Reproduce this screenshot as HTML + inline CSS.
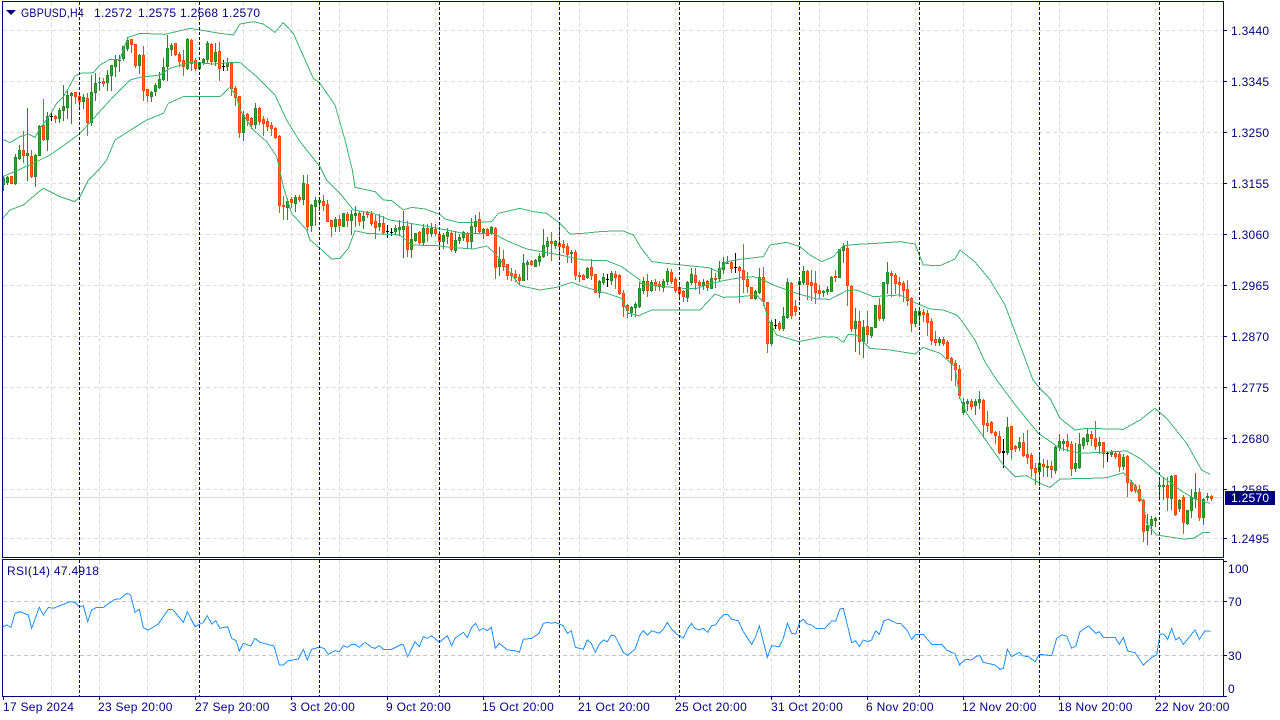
<!DOCTYPE html>
<html>
<head>
<meta charset="utf-8">
<style>
html,body{margin:0;padding:0;background:#fff;width:1280px;height:720px;overflow:hidden}
svg{position:absolute;left:0;top:0;display:block}
text{font-family:"Liberation Sans",sans-serif;font-size:12px;fill:#000080;letter-spacing:.28px}
.c{shape-rendering:crispEdges}
</style>
</head>
<body>
<svg id="s" width="1280" height="720" viewBox="0 0 1280 720" xmlns="http://www.w3.org/2000/svg">
<g id="grid" class="c"></g>
<g id="candles" class="c"></g>
<g id="lines" class="c" fill="none"></g>
<g id="seps" class="c"></g>
<g class="c" stroke="#000080" fill="none">
<path d="M2.5 1.5H1223.5V557.5H2.5Z"/>
<path d="M2.5 559.5H1223.5V696.5H2.5Z"/>
<path d="M1223 30.5h4M1223 81.5h4M1223 132.5h4M1223 183.5h4M1223 234.5h4M1223 285.5h4M1223 336.5h4M1223 387.5h4M1223 438.5h4M1223 489.5h4M1223 538.5h4"/>
<path d="M1223 561.5h4M1223 601.5h4M1223 655.5h4M1223 696.5h4"/>
<path d="M3.5 696v4M99.5 696v4M195.5 696v4M291.5 696v4M387.5 696v4M483.5 696v4M579.5 696v4M675.5 696v4M771.5 696v4M867.5 696v4M963.5 696v4M1059.5 696v4M1155.5 696v4"/>
</g>
<path d="M6 10H16L11 15Z" fill="#000080"/>
<text x="21" y="17" textLength="63" lengthAdjust="spacingAndGlyphs">GBPUSD,H4</text>
<text x="94" y="17">1.2572</text>
<text x="138" y="17">1.2575</text>
<text x="180" y="17">1.2568</text>
<text x="222" y="17">1.2570</text>
<text x="7" y="575">RSI(14) 47.4918</text>
<g>
<text x="1231" y="35">1.3440</text>
<text x="1231" y="86">1.3345</text>
<text x="1231" y="137">1.3250</text>
<text x="1231" y="188">1.3155</text>
<text x="1231" y="239">1.3060</text>
<text x="1231" y="290">1.2965</text>
<text x="1231" y="341">1.2870</text>
<text x="1231" y="392">1.2775</text>
<text x="1231" y="443">1.2680</text>
<text x="1231" y="494">1.2585</text>
<text x="1231" y="543">1.2495</text>
</g>
<rect class="c" x="1225" y="491" width="50" height="14" fill="#000080"/>
<text x="1231" y="502" style="fill:#fff">1.2570</text>
<g>
<text x="1228" y="573">100</text>
<text x="1228" y="606">70</text>
<text x="1228" y="660">30</text>
<text x="1228" y="693">0</text>
</g>
<g>
<text x="3" y="711">17 Sep 2024</text>
<text x="98" y="711">23 Sep 20:00</text>
<text x="195" y="711">27 Sep 20:00</text>
<text x="290" y="711">3 Oct 20:00</text>
<text x="386" y="711">9 Oct 20:00</text>
<text x="482" y="711">15 Oct 20:00</text>
<text x="578" y="711">21 Oct 20:00</text>
<text x="675" y="711">25 Oct 20:00</text>
<text x="771" y="711">31 Oct 20:00</text>
<text x="866" y="711">6 Nov 20:00</text>
<text x="962" y="711">12 Nov 20:00</text>
<text x="1058" y="711">18 Nov 20:00</text>
<text x="1155" y="711">22 Nov 20:00</text>
</g>
</svg>
<script>
var NS="http://www.w3.org/2000/svg";
function el(p,n,a){var e=document.createElementNS(NS,n);for(var k in a)e.setAttribute(k,a[k]);p.appendChild(e);return e;}
var D="g 176 178 184 190,g 176 177 182 184,o 176 176 183 183,g 154 157 183 184,g 145 150 158 159,o 131 150 155 162,g 108 153 155 180,o 150 156 176 177,g 154 155 176 186,g 125 126 155 155,o 99 125 139 140,g 112 116 139 150,k 113 116 116 120,o 115 116 118 122,g 108 110 118 122,g 85 106 110 120,g 91 95 107 118,g 92 93 95 123,o 92 92 96 103,o 94 96 101 106,g 94 97 101 108,o 93 98 122 135,g 75 92 122 125,g 73 83 92 100,g 77 82 82 90,o 78 81 83 86,g 70 75 82 90,g 65 65 75 90,g 55 60 66 76,g 55 60 60 71,g 46 46 58 60,g 37 40 48 50,o 39 39 44 52,o 44 44 65 67,g 54 55 65 73,o 46 55 90 100,o 89 89 95 101,g 91 92 96 101,g 83 85 91 95,g 72 79 87 88,g 58 67 79 80,g 35 48 66 80,g 43 45 49 55,o 43 43 54 55,o 52 54 61 66,o 50 60 66 75,g 38 39 68 69,o 39 40 63 70,o 58 60 68 70,g 62 62 68 69,g 58 59 62 64,g 41 43 59 62,o 43 44 61 64,g 43 52 61 65,o 42 51 68 80,k 60 66 66 70,g 58 63 66 70,o 62 63 88 95,o 86 88 97 105,o 96 96 132 137,g 111 115 132 140,o 113 114 120 125,o 117 118 124 128,g 103 108 124 128,o 107 108 121 124,o 116 119 123 135,o 118 121 126 130,o 122 125 128 135,o 127 128 137 138,o 135 136 205 212,o 196 205 206 219,g 198 201 207 219,o 197 199 202 207,g 195 197 203 211,o 195 197 199 201,g 175 183 199 204,o 175 184 226 230,g 204 205 225 231,g 197 200 206 225,g 198 200 202 210,"
+"o 195 201 205 210,o 200 204 221 221,o 220 220 226 236,g 217 219 226 231,o 215 219 225 231,g 213 213 226 226,o 212 214 220 226,g 210 214 220 234,g 206 213 215 226,o 211 213 221 225,g 212 216 220 228,o 211 212 214 217,o 211 214 223 225,o 215 221 227 238,g 214 223 226 230,o 216 223 232 234,k 225 231 231 237,k 228 232 232 235,g 225 228 231 234,g 220 227 229 235,g 211 226 229 257,o 221 226 249 256,g 224 239 249 257,g 233 233 240 241,o 231 232 242 244,g 224 228 242 245,o 224 228 233 241,g 223 228 233 236,o 224 229 233 235,o 231 234 241 248,g 233 235 241 248,g 228 232 236 243,o 231 233 249 251,g 231 240 250 252,g 234 237 240 243,g 231 232 237 240,o 232 233 241 247,g 218 226 241 248,g 215 221 226 232,o 212 219 231 232,g 228 229 232 238,o 228 229 235 235,g 226 227 233 234,o 227 228 267 278,g 247 259 266 275,o 250 259 266 270,o 264 264 275 279,o 268 273 275 280,o 270 274 277 281,o 274 277 280 284,g 254 263 280 280,g 260 262 264 279,o 260 261 264 265,g 259 260 266 266,g 253 256 261 265,g 229 245 256 257,g 237 241 246 255,o 232 241 243 260,g 240 241 245 248,o 225 243 246 258,o 240 244 247 252,o 243 246 254 262,g 250 252 253 262,o 250 252 275 279,o 272 275 276 281,o 274 275 279 279,g 267 268 277 278,o 259 267 275 279,o 274 274 292 292,g 280 281 292 297,g 273 277 282 284,k 274 279 279 286,g 271 273 280 284,o 271 274 277 288,o 274 275 293 294,o 290 293 306 316,o 304 305 310 317,g 306 307 312 316,g 302 304 307 316,g 282 288 306 307,"
+"g 277 281 290 293,o 274 281 290 296,g 280 282 290 291,o 279 282 285 290,o 281 284 286 290,g 279 281 287 291,g 268 271 281 284,o 269 272 281 283,o 277 279 290 292,o 283 287 293 299,o 290 291 296 301,g 281 282 297 301,g 268 274 282 284,o 268 275 282 289,o 280 282 285 293,g 279 282 285 289,o 280 281 287 290,g 268 278 288 288,o 273 278 279 287,g 261 268 278 280,g 257 262 269 273,g 256 263 263 263,o 261 262 268 272,k 253 267 267 272,o 266 267 270 302,o 244 270 279 292,o 272 279 286 292,o 288 287 298 298,g 290 291 298 299,g 268 277 292 293,o 267 277 301 305,o 302 302 343 352,g 320 322 343 345,k 319 325 325 328,o 321 323 328 330,g 307 316 328 330,g 278 282 317 318,o 282 283 315 318,o 300 306 311 315,g 280 281 284 300,g 266 271 282 284,o 270 271 284 299,o 270 282 285 300,o 271 283 292 303,o 285 290 293 298,g 290 291 292 296,g 286 289 291 294,g 276 277 291 291,o 270 276 277 281,g 249 249 277 277,g 243 246 250 262,o 241 248 285 305,o 285 286 328 331,g 308 321 328 351,o 311 321 341 354,g 320 327 341 357,o 311 326 334 343,g 327 327 335 337,g 305 305 327 327,o 298 305 318 320,g 282 282 318 320,g 262 272 283 293,o 271 273 275 296,o 273 275 283 293,o 277 282 284 296,o 281 283 290 301,o 280 289 300 305,o 297 298 323 331,g 308 311 323 326,g 308 311 315 325,o 309 312 314 321,o 310 313 322 335,o 318 321 340 344,o 331 339 342 345,g 337 339 342 345,o 337 339 343 345,o 340 342 358 358,o 357 358 363 380,o 360 363 369 385,o 365 369 395 398,"
+"g 398 402 412 414,g 399 401 403 410,o 399 401 406 409,g 399 401 405 414,g 391 399 402 408,o 399 400 424 437,o 411 423 425 431,o 421 422 432 433,o 431 432 435 443,o 431 436 452 453,k 439 451 452 467,g 417 427 452 454,o 426 426 449 458,o 445 446 448 451,g 437 442 447 450,o 433 442 455 456,o 430 454 457 463,o 453 455 468 476,o 463 468 472 484,g 453 463 471 485,o 459 464 466 476,g 460 466 467 476,o 461 466 469 477,g 445 447 470 473,g 434 441 447 450,g 439 441 443 450,o 434 441 446 451,o 441 444 468 475,g 443 463 468 471,g 433 444 467 468,g 437 438 445 448,g 429 434 441 444,o 431 434 438 445,o 421 438 446 449,g 437 442 445 453,o 442 442 453 467,k 452 453 453 461,g 450 452 454 456,o 451 453 456 458,o 452 454 466 471,g 454 457 466 469,o 455 456 482 496,o 480 482 490 491,o 484 486 490 492,o 485 489 500 501,o 499 500 531 541,g 514 525 530 544,g 516 519 525 534,g 517 518 520 526,g 478 485 486 498,g 478 485 486 499,o 477 485 497 510,g 475 476 498 509,o 475 475 514 515,g 499 500 508 511,o 495 497 522 533,g 510 510 523 524,g 489 497 510 517,g 473 492 498 507,o 488 492 517 520,g 498 499 517 524,g 493 496 497 500,o 495 496 498 500";
var C={g:["#228B22","#2fa52f"],o:["#FF4500","#FF6A00"],k:["#000","#000"]};
var cg=document.getElementById("candles");
D.split(",").forEach(function(r,i){
  var p=r.split(" "),x=3+4*i,h=+p[1],t=+p[2],b=+p[3],l=+p[4],c=C[p[0]];
  el(cg,"rect",{x:x,y:h,width:1,height:Math.max(l-h+1,1),fill:c[0]});
  el(cg,"rect",{x:x-1,y:t,width:3,height:Math.max(b-t+1,1),fill:c[0]});
  if(b-t>=2)el(cg,"rect",{x:x,y:t+1,width:1,height:b-t-1,fill:c[1]});
});
function Z(ox,oy,a){var o=[];for(var i=0;i<a.length;i+=2)o.push((ox+a[i]/3)+","+(oy+a[i+1]/3));return o;}
var up=[].concat(
 Z(0,0,[8,418,30,428,60,410,85,402,105,412,120,385,150,345,170,310,190,290,205,265,225,228,240,220,280,218,300,195,330,178,360,178,375,135,385,112,420,100,495,103,520,97,570,85,600,90,660,100,700,105,720,72,760,65,790,72,825,97,850,68,880,100,940,235,960,250]),
 ["335,105","345,140"],
 Z(320,170,[97,0,105,52,165,65,190,90,215,92,250,120,275,112,315,117,360,133,375,147,415,157,460,157,515,155,535,130,600,115,640,125,680,130,720,160,750,192,790,190,850,184,910,183,940,195,960,228]),
 Z(640,220,[0,80,20,105,35,125,105,133,205,143,235,155,260,125,300,118,370,110,390,75,440,67,480,80,510,105,545,125,580,110,610,77,650,73,710,70,780,65,825,72,850,135,900,137,945,117,960,90]),
 ["975,262","990,280","1005,305","1020,345","1033,380"],
 Z(960,380,[240,25,270,55,300,115,345,150,380,145,490,148,540,120,585,85,620,115,680,190,725,270,750,283]));
var mid=[].concat(
 Z(0,0,[8,530,100,490,150,465,200,430,240,400,290,345,340,290,390,240,420,232,480,225,510,205,570,187,640,192,700,187,720,187,770,230,825,285,860,360,900,425,960,500]),
 Z(320,170,[20,30,60,70,100,120,160,130,210,150,300,165,380,180,430,190,520,190,560,212,620,237,720,255,790,270,860,272,905,290,960,330]),
 Z(640,220,[0,190,40,197,130,205,170,205,215,190,250,182,300,173,340,170,370,180,400,195,470,220,530,237,570,238,620,212,650,210,700,230,780,225,830,250,870,267,910,270,950,285,960,295]),
 ["975,340","985,362"],
 Z(960,380,[110,0,170,80,235,160,300,205,360,220,500,213,540,235,600,285,660,330,700,355,750,370]));
var low=[].concat(
 Z(0,0,[8,655,30,630,70,615,105,585,130,565,180,590,225,605,240,590,265,540,300,505,320,480,345,420,400,385,440,360,490,340,505,310,550,290,660,290,690,262,710,290,720,330,760,390,800,425,830,470,850,560,875,640,920,690,930,720]),
 Z(320,170,[0,235,35,267,60,265,85,235,105,182,140,190,240,195,275,225,350,227,390,232,460,237,500,228,525,250,560,295,600,347,660,360,710,352,755,337,790,350,860,370,905,385,925,430,960,438]),
 Z(640,220,[0,285,35,270,180,270,225,222,250,232,300,230,350,225,370,245,385,300,410,345,475,365,550,350,590,352,610,367,625,343,650,345,690,385,750,390,825,402,850,382,900,400,945,440]),
 Z(960,380,[0,55,20,100,70,170,130,255,165,290,200,287,240,310,270,322,300,297,390,295,440,293,490,278,520,310,550,370,560,430,590,465,670,477,700,475,730,457,750,457]));
var rsi=[].concat(
 Z(0,550,[8,230,20,225,33,232,45,190,60,185,85,195,95,235,118,172,130,195,145,172,160,175,210,155,225,158,238,170,250,167,263,215,275,180,290,172,310,172,345,148,360,147,380,130,392,135,405,187,418,178,430,233,445,240,475,222,505,178,518,178,550,217,562,185,585,230,610,217,622,197,635,222,647,212,660,235,683,230,695,265,708,272,718,303,730,280,752,288,765,265,780,277,822,288,838,345,850,345,862,333,895,327,910,298,922,330,935,298,960,291]),
 Z(320,590,[0,172,12,175,25,193,45,182,58,185,70,167,82,172,95,163,105,163,118,172,135,157,155,172,165,175,178,167,190,178,215,178,245,163,250,165,263,200,285,155,298,170,310,140,322,145,335,137,358,157,382,137,395,167,405,145,430,127,442,143,455,112,467,100,478,122,490,115,502,122,514,112,526,175,538,160,562,180,585,182,598,187,610,148,635,145,657,130,670,100,683,97,695,100,705,97,730,107,742,130,754,122,766,172,790,178,802,150,814,160,826,187,838,162,850,150,862,155,874,135,885,138,910,187,922,196,945,178,960,135]),
 Z(640,590,[10,122,22,135,35,122,58,130,70,118,82,97,95,118,107,130,130,145,142,118,155,100,165,115,178,120,190,115,203,127,215,107,227,105,240,85,252,73,263,73,275,88,295,92,310,125,335,163,347,140,358,108,382,202,395,167,418,170,430,145,442,100,455,130,467,132,480,95,490,88,502,102,515,105,527,115,555,115,575,93,587,93,600,57,610,55,635,158,647,152,658,170,670,150,683,155,695,150,707,122,718,133,732,92,745,88,770,100,782,100,802,122,815,148,827,133,850,133,875,163,905,163,920,180,945,192,960,228]),
 Z(960,550,[0,342,18,328,35,330,50,318,60,317,70,337,105,345,120,358,130,355,142,298,155,320,178,307,190,318,205,320,225,335,238,313,275,317,290,265,305,255,320,258,335,295,348,287,360,245,385,228,408,250,418,245,430,262,465,262,478,283,490,262,503,303,525,308,550,345,575,322,590,315,600,252,612,253,623,268,635,235,647,270,658,262,670,283,705,240,718,268,735,243,752,244]));
var lg=document.getElementById("lines");
[up,mid,low].forEach(function(p){el(lg,"polyline",{points:p.join(" "),stroke:"#3CB371","stroke-width":1});});
el(lg,"polyline",{points:rsi.join(" "),stroke:"#1E90FF","stroke-width":1});
var g=document.getElementById("grid"),i,x,y;
var ys=[30,81,132,183,234,285,336,387,438,489,538];
ys.forEach(function(v){el(g,"line",{x1:3,x2:1223,y1:v+.5,y2:v+.5,stroke:"#dcdcdc","stroke-dasharray":"4 3"});});
[601,655].forEach(function(v){el(g,"line",{x1:3,x2:1223,y1:v+.5,y2:v+.5,stroke:"#c4c4c4","stroke-dasharray":"4 3"});});
for(x=51;x<1223;x+=48){
 el(g,"line",{x1:x+.5,x2:x+.5,y1:2,y2:557,stroke:"#dcdcdc","stroke-dasharray":"4 3"});
 el(g,"line",{x1:x+.5,x2:x+.5,y1:560,y2:696,stroke:"#dcdcdc","stroke-dasharray":"4 3"});
}
el(g,"line",{x1:3,x2:1223,y1:497.5,y2:497.5,stroke:"#d9d9d9"});
var sp=document.getElementById("seps");
for(x=79;x<1223;x+=120){
 el(sp,"line",{x1:x+.5,x2:x+.5,y1:2,y2:557,stroke:"#000080","stroke-dasharray":"3 2"});
 el(sp,"line",{x1:x+.5,x2:x+.5,y1:560,y2:696,stroke:"#000080","stroke-dasharray":"3 2"});
}
</script>
</body>
</html>
